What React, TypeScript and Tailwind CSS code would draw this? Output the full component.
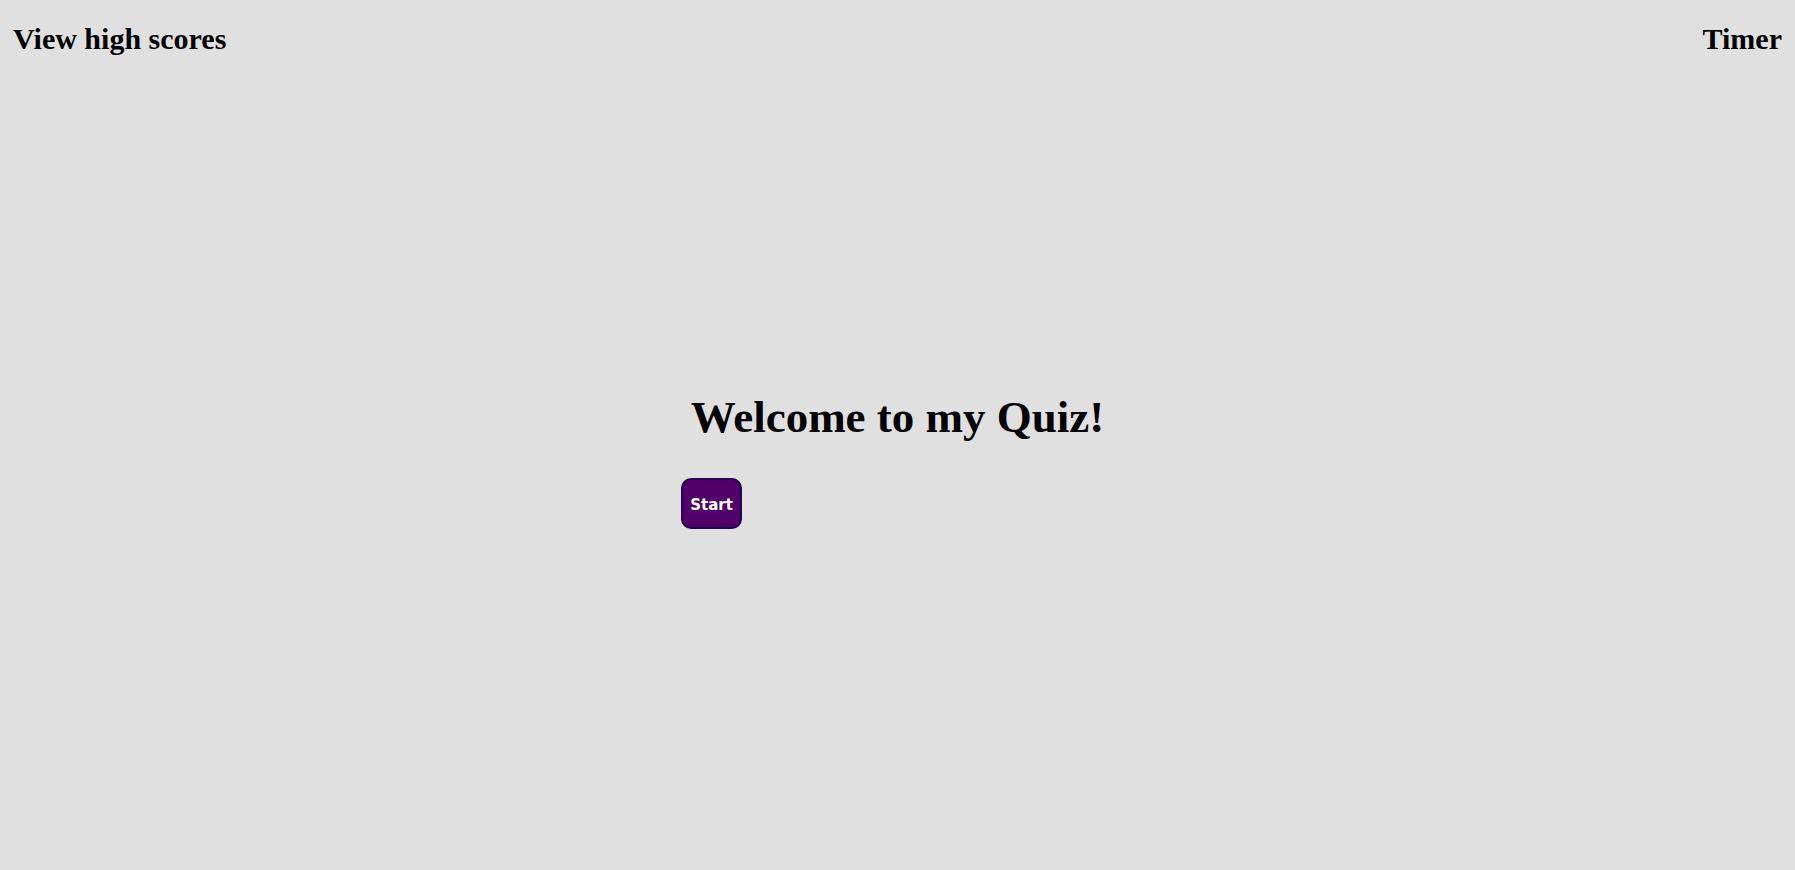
import React from 'react';

export default function App() {
  return (
    <div className="min-h-[870px] bg-[#e0e0e0] text-black" style={{ fontFamily: '"Liberation Serif", "Times New Roman", serif' }}>
      <header className="flex justify-between items-center px-[13px] pt-[19px]">
        <h2 className="text-[30px] font-bold leading-[40px]">View high scores</h2>
        <h2 className="text-[30px] font-bold leading-[40px]">Timer</h2>
      </header>
      <main className="w-[433px] mx-auto pt-[328px]">
        <div className="flex justify-center">
          <h1 className="whitespace-nowrap text-[45px] font-bold leading-[60px]">Welcome to my Quiz!</h1>
        </div>
        <button
          className="mt-[31px] w-[61px] h-[51px] pt-[3px] rounded-[10px] border-2 border-[#220850] bg-[#500068] text-white text-[15px] font-bold"
          style={{ fontFamily: '"DejaVu Sans", Verdana, sans-serif' }}
        >
          Start
        </button>
      </main>
    </div>
  );
}
